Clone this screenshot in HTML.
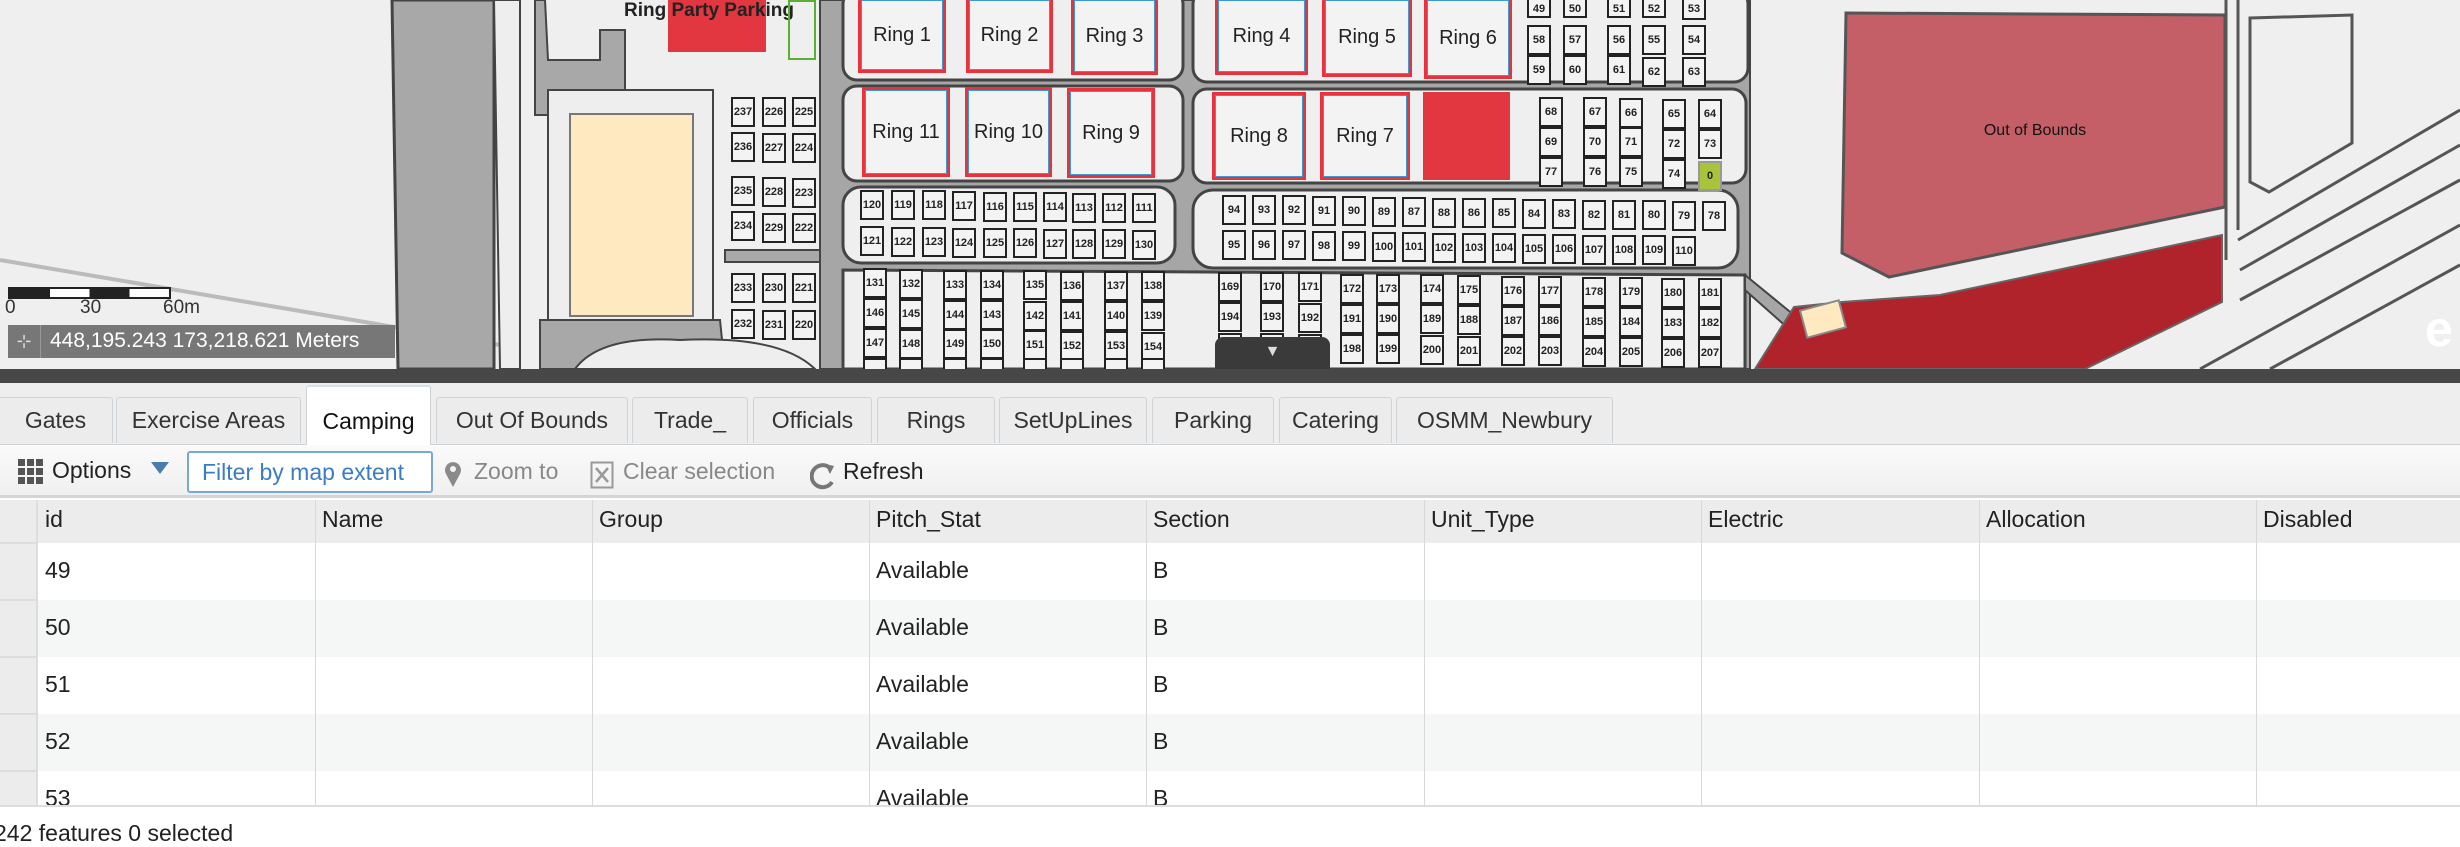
<!DOCTYPE html>
<html><head><meta charset="utf-8"><style>
*{margin:0;padding:0;box-sizing:border-box}
body{width:2460px;height:844px;overflow:hidden;position:relative;background:#fff;font-family:"Liberation Sans",sans-serif}
.a{position:absolute}
.p{position:absolute;width:24px;height:30px;border:2.5px solid #222;background:#f3f3f3;font:bold 11px "Liberation Sans",sans-serif;text-align:center;line-height:26px;color:#222}
.r{position:absolute;border:3px solid #e8323c;background:#f3f3f3;font:20px "Liberation Sans",sans-serif;color:#222;display:flex;align-items:center;justify-content:center;box-shadow:inset 0 0 0 1px #3a9bd0}
.tab{position:absolute;top:397px;height:46px;background:#ececec;border:1px solid #cfd3d6;border-bottom:none;font-size:23px;color:#333;text-align:center;line-height:44px;border-radius:3px 3px 0 0}
.col{position:absolute;top:500px;height:305px;border-left:1px solid #d8d8d8}
.h{position:absolute;top:506px;font-size:23px;color:#222}
.c{position:absolute;font-size:23px;color:#222}
</style></head><body>
<!-- MAP -->
<div class="a" style="left:0;top:0;width:2460px;height:369px;background:#efefef;overflow:hidden">
 <svg class="a" style="left:0;top:0" width="2460" height="369">
  <line x1="0" y1="260" x2="500" y2="345" stroke="#bbb" stroke-width="4"/>
  <polygon points="392,0 494,0 494,369 398,369" fill="#a8a8a8" stroke="#444" stroke-width="3"/>
  <polygon points="494,0 520,0 520,369 500,369" fill="#eee" stroke="#444" stroke-width="2"/>
  <polygon points="535,0 545,0 548,60 600,60 600,30 625,30 625,90 560,90 560,115 535,115" fill="#a8a8a8" stroke="#444" stroke-width="2"/>
  <rect x="548" y="90" width="165" height="230" fill="#eee" stroke="#444" stroke-width="2"/>
  <polygon points="540,320 720,320 725,369 540,369" fill="#a8a8a8" stroke="#444" stroke-width="2"/>
  <path d="M575,369 Q600,335 680,340 Q780,335 815,369Z" fill="#eee" stroke="#444" stroke-width="2"/>
  <rect x="725" y="250" width="108" height="12" fill="#a8a8a8" stroke="#444" stroke-width="2"/>
  <rect x="820" y="0" width="930" height="369" fill="#a6a6a6" stroke="#444" stroke-width="2"/>
  <rect x="843" y="-10" width="340" height="90" rx="14" fill="#efefef" stroke="#444" stroke-width="3"/>
  <rect x="843" y="86" width="340" height="95" rx="14" fill="#efefef" stroke="#444" stroke-width="3"/>
  <rect x="843" y="187" width="332" height="76" rx="18" fill="#efefef" stroke="#444" stroke-width="3"/>
  <rect x="1193" y="-10" width="555" height="92" rx="14" fill="#efefef" stroke="#444" stroke-width="3"/>
  <rect x="1193" y="89" width="553" height="94" rx="14" fill="#efefef" stroke="#444" stroke-width="3"/>
  <rect x="1193" y="190" width="545" height="78" rx="20" fill="#efefef" stroke="#444" stroke-width="3"/>
  <polygon points="843,270 1745,275 1745,369 843,369" fill="#efefef" stroke="#444" stroke-width="3"/>
  <polygon points="1745,275 1800,320 1790,330 1745,290" fill="#a6a6a6" stroke="#444" stroke-width="2"/>
  <polygon points="1846,13 2225,15 2225,207 1889,277 1842,253" fill="#c45f67" stroke="#555" stroke-width="3"/>
  <polygon points="1794,307 1842,302 1940,295 2222,235 2222,302 2085,369 1755,369" fill="#b0232b" stroke="#666" stroke-width="2"/>
  <rect x="1803" y="305" width="40" height="28" fill="#ffe9c0" stroke="#888" stroke-width="2" transform="rotate(-15 1823 319)"/>
  <line x1="2226" y1="0" x2="2226" y2="260" stroke="#555" stroke-width="3"/>
  <line x1="2238" y1="0" x2="2238" y2="230" stroke="#555" stroke-width="3"/>
  <polygon points="2250,18 2352,15 2352,143 2269,192 2250,182" fill="none" stroke="#555" stroke-width="3"/>
  <line x1="2238" y1="240" x2="2460" y2="110" stroke="#555" stroke-width="3"/>
  <line x1="2240" y1="270" x2="2460" y2="145" stroke="#555" stroke-width="3"/>
  <line x1="2240" y1="300" x2="2460" y2="180" stroke="#555" stroke-width="3"/>
  <line x1="2200" y1="369" x2="2460" y2="225" stroke="#555" stroke-width="3"/>
  <line x1="2270" y1="369" x2="2460" y2="265" stroke="#555" stroke-width="3"/>
 </svg>
 <div class="a" style="left:569px;top:113px;width:125px;height:204px;background:#ffe9c0;border:2px solid #777"></div>
 <div class="a" style="left:668px;top:0;width:98px;height:52px;background:#e23640"></div>
 <div class="a" style="left:624px;top:0;font:bold 19px 'Liberation Sans',sans-serif;color:#222">Ring Party Parking</div>
 <div class="a" style="left:788px;top:0;width:28px;height:60px;border:2px solid #5ab030"></div>
 <div class="a" style="left:2035px;top:122px;transform:translateX(-50%);font-size:16px;color:#111">Out of Bounds</div>
 <div class="a" style="left:1423px;top:92px;width:87px;height:88px;background:#e23640"></div>
 <div class="r" style="left:858px;top:-3px;width:88px;height:76px">Ring 1</div>
 <div class="r" style="left:966px;top:-3px;width:87px;height:76px">Ring 2</div>
 <div class="r" style="left:1071px;top:-3px;width:87px;height:78px">Ring 3</div>
 <div class="r" style="left:862px;top:87px;width:88px;height:90px">Ring 11</div>
 <div class="r" style="left:965px;top:87px;width:87px;height:90px">Ring 10</div>
 <div class="r" style="left:1067px;top:88px;width:88px;height:90px">Ring 9</div>
 <div class="r" style="left:1215px;top:-3px;width:93px;height:78px">Ring 4</div>
 <div class="r" style="left:1322px;top:-3px;width:90px;height:80px">Ring 5</div>
 <div class="r" style="left:1424px;top:-3px;width:88px;height:82px">Ring 6</div>
 <div class="r" style="left:1212px;top:92px;width:94px;height:88px">Ring 8</div>
 <div class="r" style="left:1320px;top:92px;width:90px;height:88px">Ring 7</div>
 <!-- pitches 49-77 -->
 <div class="p" style="left:1527px;top:-6px;height:24px">49</div><div class="p" style="left:1563px;top:-6px;height:24px">50</div><div class="p" style="left:1607px;top:-6px;height:24px">51</div><div class="p" style="left:1642px;top:-6px;height:24px">52</div><div class="p" style="left:1682px;top:-6px;height:26px">53</div>
 <div class="p" style="left:1527px;top:25px">58</div><div class="p" style="left:1563px;top:25px">57</div><div class="p" style="left:1607px;top:25px">56</div><div class="p" style="left:1642px;top:25px">55</div><div class="p" style="left:1682px;top:25px">54</div>
 <div class="p" style="left:1527px;top:55px">59</div><div class="p" style="left:1563px;top:55px">60</div><div class="p" style="left:1607px;top:55px">61</div><div class="p" style="left:1642px;top:57px">62</div><div class="p" style="left:1682px;top:57px">63</div>
 <div class="p" style="left:1539px;top:97px">68</div><div class="p" style="left:1583px;top:97px">67</div><div class="p" style="left:1619px;top:98px">66</div><div class="p" style="left:1662px;top:99px">65</div><div class="p" style="left:1698px;top:99px">64</div>
 <div class="p" style="left:1539px;top:127px">69</div><div class="p" style="left:1583px;top:127px">70</div><div class="p" style="left:1619px;top:127px">71</div><div class="p" style="left:1662px;top:129px">72</div><div class="p" style="left:1698px;top:129px">73</div>
 <div class="p" style="left:1539px;top:157px">77</div><div class="p" style="left:1583px;top:157px">76</div><div class="p" style="left:1619px;top:157px">75</div><div class="p" style="left:1662px;top:159px">74</div><div class="p" style="left:1698px;top:161px;background:#a8c43a;border-color:#999">0</div>
 <!-- 111-130 -->
 <div class="p" style="left:860px;top:190px">120</div><div class="p" style="left:891px;top:190px">119</div><div class="p" style="left:922px;top:190px">118</div><div class="p" style="left:952px;top:191px">117</div><div class="p" style="left:983px;top:192px">116</div><div class="p" style="left:1013px;top:192px">115</div><div class="p" style="left:1043px;top:192px">114</div><div class="p" style="left:1072px;top:193px">113</div><div class="p" style="left:1102px;top:193px">112</div><div class="p" style="left:1132px;top:193px">111</div>
 <div class="p" style="left:860px;top:226px">121</div><div class="p" style="left:891px;top:227px">122</div><div class="p" style="left:922px;top:227px">123</div><div class="p" style="left:952px;top:228px">124</div><div class="p" style="left:983px;top:228px">125</div><div class="p" style="left:1013px;top:228px">126</div><div class="p" style="left:1043px;top:229px">127</div><div class="p" style="left:1072px;top:229px">128</div><div class="p" style="left:1102px;top:229px">129</div><div class="p" style="left:1132px;top:230px">130</div>
 <!-- 78-110 -->
 <div class="p" style="left:1222px;top:195px">94</div><div class="p" style="left:1252px;top:195px">93</div><div class="p" style="left:1282px;top:195px">92</div><div class="p" style="left:1312px;top:196px">91</div><div class="p" style="left:1342px;top:196px">90</div><div class="p" style="left:1372px;top:197px">89</div><div class="p" style="left:1402px;top:197px">87</div><div class="p" style="left:1432px;top:198px">88</div><div class="p" style="left:1462px;top:198px">86</div><div class="p" style="left:1492px;top:198px">85</div><div class="p" style="left:1522px;top:199px">84</div><div class="p" style="left:1552px;top:199px">83</div><div class="p" style="left:1582px;top:200px">82</div><div class="p" style="left:1612px;top:200px">81</div><div class="p" style="left:1642px;top:200px">80</div><div class="p" style="left:1672px;top:201px">79</div><div class="p" style="left:1702px;top:201px">78</div>
 <div class="p" style="left:1222px;top:230px">95</div><div class="p" style="left:1252px;top:230px">96</div><div class="p" style="left:1282px;top:230px">97</div><div class="p" style="left:1312px;top:231px">98</div><div class="p" style="left:1342px;top:231px">99</div><div class="p" style="left:1372px;top:232px">100</div><div class="p" style="left:1402px;top:232px">101</div><div class="p" style="left:1432px;top:233px">102</div><div class="p" style="left:1462px;top:233px">103</div><div class="p" style="left:1492px;top:233px">104</div><div class="p" style="left:1522px;top:234px">105</div><div class="p" style="left:1552px;top:234px">106</div><div class="p" style="left:1582px;top:235px">107</div><div class="p" style="left:1612px;top:235px">108</div><div class="p" style="left:1642px;top:235px">109</div><div class="p" style="left:1672px;top:236px">110</div>
 <!-- lower left -->
 <div class="p" style="left:863px;top:268px">131</div><div class="p" style="left:899px;top:269px">132</div><div class="p" style="left:943px;top:270px">133</div><div class="p" style="left:980px;top:270px">134</div><div class="p" style="left:1023px;top:270px">135</div><div class="p" style="left:1060px;top:271px">136</div><div class="p" style="left:1104px;top:271px">137</div><div class="p" style="left:1141px;top:271px">138</div>
 <div class="p" style="left:863px;top:298px">146</div><div class="p" style="left:899px;top:299px">145</div><div class="p" style="left:943px;top:300px">144</div><div class="p" style="left:980px;top:300px">143</div><div class="p" style="left:1023px;top:301px">142</div><div class="p" style="left:1060px;top:301px">141</div><div class="p" style="left:1104px;top:301px">140</div><div class="p" style="left:1141px;top:301px">139</div>
 <div class="p" style="left:863px;top:328px">147</div><div class="p" style="left:899px;top:329px">148</div><div class="p" style="left:943px;top:329px">149</div><div class="p" style="left:980px;top:329px">150</div><div class="p" style="left:1023px;top:330px">151</div><div class="p" style="left:1060px;top:331px">152</div><div class="p" style="left:1104px;top:331px">153</div><div class="p" style="left:1141px;top:332px">154</div>
 <div class="p" style="left:863px;top:358px"></div><div class="p" style="left:899px;top:358px"></div><div class="p" style="left:943px;top:358px"></div><div class="p" style="left:980px;top:358px"></div><div class="p" style="left:1023px;top:358px"></div><div class="p" style="left:1060px;top:358px"></div><div class="p" style="left:1104px;top:358px"></div><div class="p" style="left:1141px;top:358px"></div>
 <!-- lower right -->
 <div class="p" style="left:1218px;top:272px">169</div><div class="p" style="left:1260px;top:272px">170</div><div class="p" style="left:1298px;top:272px">171</div><div class="p" style="left:1340px;top:274px">172</div><div class="p" style="left:1376px;top:274px">173</div><div class="p" style="left:1420px;top:274px">174</div><div class="p" style="left:1457px;top:275px">175</div><div class="p" style="left:1501px;top:276px">176</div><div class="p" style="left:1538px;top:276px">177</div><div class="p" style="left:1582px;top:277px">178</div><div class="p" style="left:1619px;top:277px">179</div><div class="p" style="left:1661px;top:278px">180</div><div class="p" style="left:1698px;top:278px">181</div>
 <div class="p" style="left:1218px;top:302px">194</div><div class="p" style="left:1260px;top:302px">193</div><div class="p" style="left:1298px;top:303px">192</div><div class="p" style="left:1340px;top:304px">191</div><div class="p" style="left:1376px;top:304px">190</div><div class="p" style="left:1420px;top:304px">189</div><div class="p" style="left:1457px;top:305px">188</div><div class="p" style="left:1501px;top:306px">187</div><div class="p" style="left:1538px;top:306px">186</div><div class="p" style="left:1582px;top:307px">185</div><div class="p" style="left:1619px;top:307px">184</div><div class="p" style="left:1661px;top:308px">183</div><div class="p" style="left:1698px;top:308px">182</div>
 <div class="p" style="left:1218px;top:333px">195</div><div class="p" style="left:1260px;top:333px">196</div><div class="p" style="left:1298px;top:334px">197</div><div class="p" style="left:1340px;top:334px">198</div><div class="p" style="left:1376px;top:334px">199</div><div class="p" style="left:1420px;top:335px">200</div><div class="p" style="left:1457px;top:336px">201</div><div class="p" style="left:1501px;top:336px">202</div><div class="p" style="left:1538px;top:336px">203</div><div class="p" style="left:1582px;top:337px">204</div><div class="p" style="left:1619px;top:337px">205</div><div class="p" style="left:1661px;top:338px">206</div><div class="p" style="left:1698px;top:338px">207</div>
 <!-- 220-237 -->
 <div class="p" style="left:731px;top:97px">237</div><div class="p" style="left:762px;top:97px">226</div><div class="p" style="left:792px;top:97px">225</div>
 <div class="p" style="left:731px;top:132px">236</div><div class="p" style="left:762px;top:133px">227</div><div class="p" style="left:792px;top:133px">224</div>
 <div class="p" style="left:731px;top:176px">235</div><div class="p" style="left:762px;top:177px">228</div><div class="p" style="left:792px;top:178px">223</div>
 <div class="p" style="left:731px;top:211px">234</div><div class="p" style="left:762px;top:213px">229</div><div class="p" style="left:792px;top:213px">222</div>
 <div class="p" style="left:731px;top:273px">233</div><div class="p" style="left:762px;top:273px">230</div><div class="p" style="left:792px;top:273px">221</div>
 <div class="p" style="left:731px;top:309px">232</div><div class="p" style="left:762px;top:310px">231</div><div class="p" style="left:792px;top:310px">220</div>
 <!-- scale -->
 <div class="a" style="left:8px;top:287px;width:163px;height:12px;border:2px solid #222;background:linear-gradient(90deg,#222 0 25%,#fff 25% 50%,#222 50% 75%,#fff 75%)"></div>
 <div class="a" style="left:5px;top:297px;font-size:19px;color:#333">0</div>
 <div class="a" style="left:80px;top:297px;font-size:19px;color:#333">30</div>
 <div class="a" style="left:163px;top:297px;font-size:19px;color:#333">60m</div>
 <div class="a" style="left:8px;top:325px;width:387px;height:33px;background:#777"></div>
 <div class="a" style="left:8px;top:325px;width:33px;height:33px;border-right:1px solid #999;color:#ddd;font-size:18px;text-align:center;line-height:33px">⊹</div>
 <div class="a" style="left:50px;top:329px;font-size:21px;color:#fff">448,195.243 173,218.621 Meters</div>
 <div class="a" style="left:1215px;top:337px;width:115px;height:40px;background:#3a3a3a;border-radius:8px 8px 0 0;color:#ddd;text-align:center;font-size:16px;line-height:30px">▼</div>
 <div class="a" style="left:2425px;top:300px;font:bold 50px 'Liberation Sans',sans-serif;color:#fff">e</div>
</div>
<div class="a" style="left:0;top:369px;width:2460px;height:14px;background:#474747"></div>
<!-- tabs -->
<div class="a" style="left:0;top:383px;width:2460px;height:62px;background:#eee;border-bottom:1px solid #cfd3d6"></div>
<div class="tab" style="left:-2px;width:115px">Gates</div>
<div class="tab" style="left:116px;width:185px">Exercise Areas</div>
<div class="tab" style="left:306px;top:385px;height:61px;width:125px;background:#fff;color:#111;line-height:68px;border-top:2px solid #cfe0ee">Camping</div>
<div class="tab" style="left:436px;width:192px">Out Of Bounds</div>
<div class="tab" style="left:632px;width:116px">Trade_</div>
<div class="tab" style="left:753px;width:119px">Officials</div>
<div class="tab" style="left:877px;width:118px">Rings</div>
<div class="tab" style="left:999px;width:148px">SetUpLines</div>
<div class="tab" style="left:1152px;width:122px">Parking</div>
<div class="tab" style="left:1279px;width:113px">Catering</div>
<div class="tab" style="left:1396px;width:217px">OSMM_Newbury</div>
<!-- toolbar -->
<div class="a" style="left:0;top:445px;width:2460px;height:53px;background:linear-gradient(#fafafa,#f0f0f0);border-bottom:3px solid #d4d4d4"></div>
<svg class="a" style="left:18px;top:459px" width="26" height="26"><g fill="#555"><rect x="0" y="0" width="7" height="7"/><rect x="9" y="0" width="7" height="7"/><rect x="18" y="0" width="7" height="7"/><rect x="0" y="9" width="7" height="7"/><rect x="9" y="9" width="7" height="7"/><rect x="18" y="9" width="7" height="7"/><rect x="0" y="18" width="7" height="7"/><rect x="9" y="18" width="7" height="7"/><rect x="18" y="18" width="7" height="7"/></g></svg>
<div class="a" style="left:52px;top:457px;font-size:23px;color:#222">Options</div>
<div class="a" style="left:151px;top:462px;width:0;height:0;border-left:9px solid transparent;border-right:9px solid transparent;border-top:12px solid #4a7bb0"></div>
<div class="a" style="left:187px;top:451px;width:246px;height:42px;border:2px solid #7aa8d6;background:#fff;border-radius:3px;font-size:23px;color:#3b7dc4;line-height:38px;padding-left:13px">Filter by map extent</div>
<svg class="a" style="left:444px;top:460px" width="18" height="28"><path d="M9 27 L2 14 A8 8 0 1 1 16 14 Z" fill="#8a8a8a"/><circle cx="9" cy="9" r="3" fill="#f4f4f4"/></svg>
<div class="a" style="left:474px;top:458px;font-size:23px;color:#888">Zoom to</div>
<svg class="a" style="left:590px;top:461px" width="24" height="28"><rect x="1.5" y="1.5" width="21" height="25" fill="none" stroke="#999" stroke-width="2"/><path d="M6 7 L18 21 M18 7 L6 21" stroke="#999" stroke-width="2.5"/></svg>
<div class="a" style="left:623px;top:458px;font-size:23px;color:#888">Clear selection</div>
<svg class="a" style="left:810px;top:462px" width="26" height="28"><path d="M20 6 A11 11 0 1 0 22 20" fill="none" stroke="#777" stroke-width="4"/><path d="M15 2 L24 4 L20 12Z" fill="#777"/></svg>
<div class="a" style="left:843px;top:458px;font-size:23px;color:#222">Refresh</div>
<!-- table -->
<div class="a" style="left:0;top:500px;width:2460px;height:43px;background:#ececec"></div>
<div class="a" style="left:0;top:543px;width:2460px;height:57px;background:#fff"></div>
<div class="a" style="left:0;top:600px;width:2460px;height:57px;background:#f5f7f7"></div>
<div class="a" style="left:0;top:657px;width:2460px;height:57px;background:#fff"></div>
<div class="a" style="left:0;top:714px;width:2460px;height:57px;background:#f5f7f7"></div>
<div class="a" style="left:0;top:771px;width:2460px;height:34px;background:#fff"></div>
<div class="a" style="left:0;top:500px;width:38px;height:305px;background:#ececec;border-right:2px solid #ddd"></div>
<div class="a" style="left:0;top:542px;width:38px;height:2px;background:#ddd"></div>
<div class="a" style="left:0;top:599px;width:38px;height:2px;background:#ddd"></div>
<div class="a" style="left:0;top:656px;width:38px;height:2px;background:#ddd"></div>
<div class="a" style="left:0;top:713px;width:38px;height:2px;background:#ddd"></div>
<div class="a" style="left:0;top:770px;width:38px;height:2px;background:#ddd"></div>
<div class="col" style="left:315px"></div><div class="col" style="left:592px"></div><div class="col" style="left:869px"></div><div class="col" style="left:1146px"></div><div class="col" style="left:1424px"></div><div class="col" style="left:1701px"></div><div class="col" style="left:1979px"></div><div class="col" style="left:2256px"></div>
<div class="h" style="left:45px">id</div><div class="h" style="left:322px">Name</div><div class="h" style="left:599px">Group</div><div class="h" style="left:876px">Pitch_Stat</div><div class="h" style="left:1153px">Section</div><div class="h" style="left:1431px">Unit_Type</div><div class="h" style="left:1708px">Electric</div><div class="h" style="left:1986px">Allocation</div><div class="h" style="left:2263px">Disabled</div>
<div class="c" style="left:45px;top:557px">49</div><div class="c" style="left:876px;top:557px">Available</div><div class="c" style="left:1153px;top:557px">B</div>
<div class="c" style="left:45px;top:614px">50</div><div class="c" style="left:876px;top:614px">Available</div><div class="c" style="left:1153px;top:614px">B</div>
<div class="c" style="left:45px;top:671px">51</div><div class="c" style="left:876px;top:671px">Available</div><div class="c" style="left:1153px;top:671px">B</div>
<div class="c" style="left:45px;top:728px">52</div><div class="c" style="left:876px;top:728px">Available</div><div class="c" style="left:1153px;top:728px">B</div>
<div class="a" style="left:0;top:771px;width:2460px;height:34px;overflow:hidden"><div class="c" style="left:45px;top:14px">53</div><div class="c" style="left:876px;top:14px">Available</div><div class="c" style="left:1153px;top:14px">B</div></div>
<div class="a" style="left:0;top:805px;width:2460px;height:39px;background:#fff;border-top:2px solid #ddd"></div>
<div class="a" style="left:-6px;top:820px;font-size:23px;color:#222">242 features 0 selected</div>
</body></html>
